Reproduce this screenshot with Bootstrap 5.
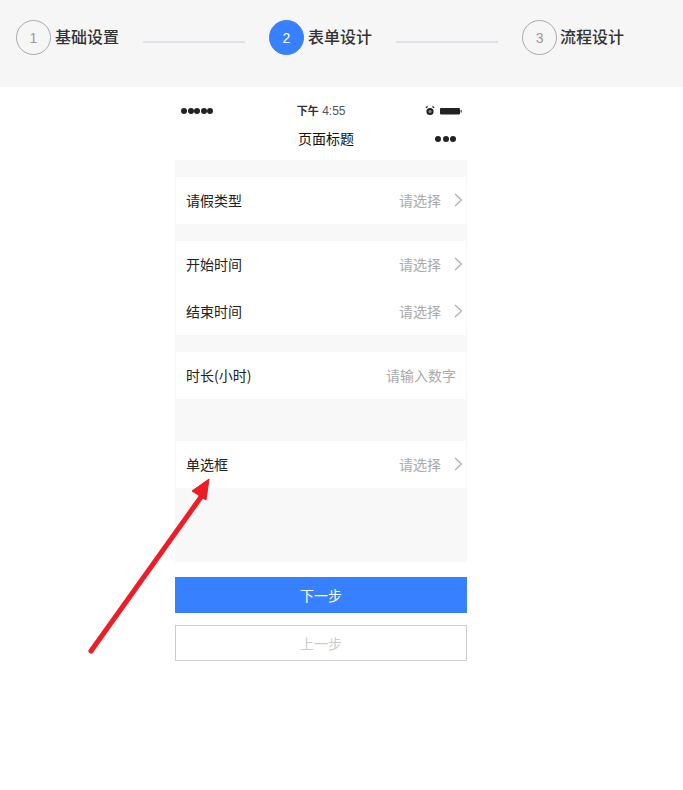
<!DOCTYPE html>
<html lang="zh">
<head>
<meta charset="utf-8">
<title>表单设计</title>
<link rel="stylesheet" href="https://cdn.jsdelivr.net/npm/bootstrap@5.3.0/dist/css/bootstrap.min.css">
<style>
html,body{height:100%}
body{font-family:"Liberation Sans","Noto Sans CJK SC",sans-serif;background:#fff;overflow:hidden}
.canvas{position:relative;height:790px}
.stepbar{height:87px;background:#f6f6f6;padding:20px 0 0 16px;gap:24px}
.stepitem{height:35px}
.stepnum{width:35px;height:35px;border:1px solid #aaa;border-radius:50%;color:#999;font-size:14px;line-height:1}
.stepnum.on{background:#3780ff;border-color:#3780ff;color:#fff}
.steplabel{font-size:16px;font-weight:500;color:#333;margin-left:4px;line-height:33px;padding-bottom:2px;font-family:"Noto Sans CJK SC",sans-serif}
.steplabel.tight{margin-left:3px}
.stepline{width:102px;height:2px;background:#dfe0e8;margin-top:21px}
.phone{width:292px;margin-left:175px}
.statusbar{height:73px;position:relative;padding-top:15px}
.sb-top{height:17px;padding:0 4px 0 6px}
.dots5{gap:.6px}
.dots5 i{width:6px;height:6px;border-radius:50%;background:#222;display:block}
.sb-time{font-size:12px;color:#555;margin-left:4px}
.sb-time b{font-size:11px;font-weight:700;color:#333;font-family:"Noto Sans CJK SC",sans-serif}
.navtitle{font-size:14px;color:#111;height:22px;line-height:22px;margin-top:8px;padding-left:10px;position:relative;text-align:center;font-family:"Noto Sans CJK SC",sans-serif}
.dots3{position:absolute;right:11px;top:9px;gap:1.5px}
.dots3 i{width:6px;height:6px;border-radius:50%;background:#222;display:block}
.formarea{background:#f8f8f8;height:402px;padding:17px 1px 0}
.fgroup{background:#fff;margin-bottom:17px}
.fgroup.extra{margin-bottom:42px}
.frow{height:47px;padding:0 10px;font-size:14px;color:#222;font-family:"Noto Sans CJK SC",sans-serif}
.fhint{color:#aaa;font-size:14px}
.chev{width:9px;height:14px;margin:-1px -7px 0 13px;flex:none}
.nextbtn,.prevbtn{display:block;width:292px;height:36px;border-radius:0;font-size:14px;line-height:36px;padding:0;font-family:"Noto Sans CJK SC",sans-serif}
.nextbtn{background:#3780ff;color:#fff;border:0;margin-top:15px}
.nextbtn:hover{background:#3780ff;color:#fff}
.prevbtn{background:#fff;color:#ccc;border:1px solid #ccc;line-height:34px;margin-top:12px}
.prevbtn:hover{background:#fff;color:#ccc;border-color:#ccc}
.arrowmark{position:absolute;left:80px;top:470px;width:140px;height:190px;pointer-events:none}
</style>
</head>
<body>
<div class="canvas">
  <div class="stepbar d-flex align-items-start">
    <div class="stepitem d-flex align-items-center">
      <span class="stepnum d-flex align-items-center justify-content-center">1</span><span class="steplabel">基础设置</span>
    </div>
    <div class="stepline"></div>
    <div class="stepitem d-flex align-items-center">
      <span class="stepnum on d-flex align-items-center justify-content-center">2</span><span class="steplabel">表单设计</span>
    </div>
    <div class="stepline"></div>
    <div class="stepitem d-flex align-items-center">
      <span class="stepnum d-flex align-items-center justify-content-center">3</span><span class="steplabel tight">流程设计</span>
    </div>
  </div>

  <div class="phone">
    <div class="statusbar">
      <div class="sb-top d-flex align-items-center justify-content-between">
        <span class="dots5 d-flex"><i></i><i></i><i></i><i></i><i></i></span>
        <span class="sb-time"><b>下午</b> 4:55</span>
        <svg width="38" height="12" viewBox="0 0 38 12"><circle cx="5" cy="6.5" r="3.6" fill="#222"/><circle cx="5" cy="6.5" r="1.6" fill="#888"/><path d="M1 2.8 2.6 1.4M9 2.8 7.4 1.4" stroke="#222" stroke-width="1.3"/><rect x="15" y="3" width="20" height="6.5" rx="1" fill="#222"/><rect x="35.5" y="5" width="1.3" height="2.6" fill="#555"/></svg>
      </div>
      <div class="navtitle">页面标题<span class="dots3 d-flex"><i></i><i></i><i></i></span></div>
    </div>
    <div class="formarea">
      <div class="fgroup">
        <div class="frow d-flex align-items-center"><span>请假类型</span><span class="fhint ms-auto">请选择</span><svg class="chev" viewBox="0 0 9 14"><path d="M1 1l6.5 6-6.5 6" fill="none" stroke="#aaa" stroke-width="1.1"/></svg></div>
      </div>
      <div class="fgroup">
        <div class="frow d-flex align-items-center"><span>开始时间</span><span class="fhint ms-auto">请选择</span><svg class="chev" viewBox="0 0 9 14"><path d="M1 1l6.5 6-6.5 6" fill="none" stroke="#aaa" stroke-width="1.1"/></svg></div>
        <div class="frow d-flex align-items-center"><span>结束时间</span><span class="fhint ms-auto">请选择</span><svg class="chev" viewBox="0 0 9 14"><path d="M1 1l6.5 6-6.5 6" fill="none" stroke="#aaa" stroke-width="1.1"/></svg></div>
      </div>
      <div class="fgroup extra">
        <div class="frow d-flex align-items-center"><span>时长(小时)</span><span class="fhint ms-auto">请输入数字</span></div>
      </div>
      <div class="fgroup">
        <div class="frow d-flex align-items-center"><span>单选框</span><span class="fhint ms-auto">请选择</span><svg class="chev" viewBox="0 0 9 14"><path d="M1 1l6.5 6-6.5 6" fill="none" stroke="#aaa" stroke-width="1.1"/></svg></div>
      </div>
    </div>
    <button type="button" class="btn nextbtn">下一步</button>
    <button type="button" class="btn prevbtn">上一步</button>
  </div>

  <svg class="arrowmark" viewBox="80 470 140 190">
    <path d="M91 651 L201 497" stroke="#ee1c25" stroke-width="5" stroke-linecap="round" fill="none"/>
    <path d="M209 479 L192 491 L206 500 Z" fill="#ee1c25" stroke="#ee1c25" stroke-width="1"/>
  </svg>
</div>
<script src="https://cdn.jsdelivr.net/npm/bootstrap@5.3.0/dist/js/bootstrap.bundle.min.js"></script>
</body>
</html>
